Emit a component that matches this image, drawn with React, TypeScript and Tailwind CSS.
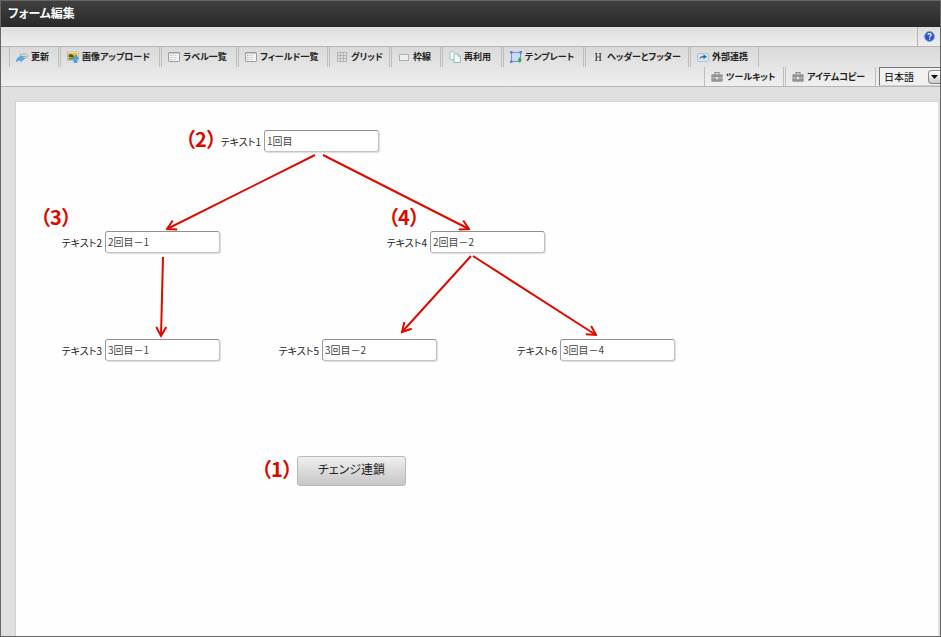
import type { ReactNode } from 'react';
import clsx from 'clsx';

interface ToolItem {
    label: string;
    icon: ReactNode;
    width: string;
}

interface FieldNode {
    id: string;
    label: string;
    value: string;
    position: string;
}

function RefreshIcon() {
    return (
        <svg width="12" height="12" viewBox="0 0 12 12" aria-hidden="true">
            <path d="M4.500 3h6l1 1.500v1.500l-1.500 1.500h-6z" fill="#d3dae0" stroke="#98a5b0" strokeWidth=".7" />
            <path d="M6 5.500h4" stroke="#7a8893" strokeWidth=".7" />
            <path d="M.5 10.500c.3-3 1.700-4.300 4-4.200L4.300 5l4 2.700-3.500 2.800v-1.400c-1.500-.2-2.600.2-4.300 1.400z" fill="#52b4ee" stroke="#2b86c9" strokeWidth=".6" />
        </svg>
    );
}

function UploadIcon() {
    return (
        <svg width="12" height="12" viewBox="0 0 12 12" aria-hidden="true">
            <rect x=".5" y="1" width="11" height="8.500" fill="#f4f6f3" stroke="#a9b5b5" strokeWidth=".8" />
            <rect x="1.500" y="2" width="9" height="6.500" fill="#f1bf16" />
            <path d="M1.500 6V4l2-1 2.500 1 1 2.500z" fill="#5c4d28" />
            <path d="M1.500 8.500V7h5v1.500z" fill="#3e8e62" />
            <path d="M8.500 4l3.200 3.500h-1.700v4H7v-4H5.300z" fill="#4cabe9" stroke="#237fc6" strokeWidth=".5" />
        </svg>
    );
}

function ListIcon({ accent = false }: { accent?: boolean }) {
    return (
        <svg width="12" height="12" viewBox="0 0 12 12" aria-hidden="true">
            <rect x=".5" y="1.500" width="11" height="9" rx=".5" fill="#f5f5f5" stroke="#8f979b" strokeWidth=".9" />
            <path d="M1 2.500h10" stroke="#c2c9cd" />
            <path d="M2 4.500h1.500M2 6.500h1.500M2 8.500h1.500" stroke={accent ? '#d4a56c' : '#adb9c3'} />
            <path d="M4.500 4.500h4M4.500 6.500h4M4.500 8.500h4" stroke="#c9d0d5" strokeWidth=".8" />
        </svg>
    );
}

function GridIcon() {
    return (
        <svg width="12" height="12" viewBox="0 0 12 12" aria-hidden="true">
            <path d="M1.500 1v10M4.500 1v10M7.500 1v10M10.500 1v10M1 1.500h10M1 4.500h10M1 7.500h10M1 10.500h10" stroke="#b4b4b4" />
        </svg>
    );
}

function FrameIcon() {
    return (
        <svg width="12" height="12" viewBox="0 0 12 12" aria-hidden="true">
            <rect x="1.500" y="3.500" width="9" height="6" fill="#eee" stroke="#b0b0b0" />
        </svg>
    );
}

function PagesIcon() {
    return (
        <svg width="12" height="12" viewBox="0 0 12 12" aria-hidden="true">
            <path d="M1 .8h4l2 2v6H1z" fill="#f5fafa" stroke="#8eb6b8" strokeWidth=".8" />
            <path d="M5 3h4l2.300 2.300v6.200H5z" fill="#fff" stroke="#7ba9ad" strokeWidth=".8" />
            <path d="M9 3v2.300h2.300" fill="#d6e8e8" stroke="#7ba9ad" strokeWidth=".7" />
        </svg>
    );
}

function TemplateIcon() {
    return (
        <svg width="12" height="12" viewBox="0 0 12 12" aria-hidden="true">
            <rect x="1.500" y="1.500" width="9" height="9" fill="#c9dcf6" stroke="#6f93e0" />
            <path d="M0 0h2.500v2.500H0zM9.500 0H12v2.500H9.500zM0 9.500h2.500V12H0z" fill="#5c7fe0" />
            <path d="M8.800 6.500h1.800v2H12L9.700 12 7.400 8.500h1.400z" fill="#2bb33c" />
        </svg>
    );
}

function HeaderIcon() {
    return (
        <svg width="12" height="12" viewBox="0 0 12 12" aria-hidden="true">
            <path d="M3 2.500h2.500M7 2.500h2.500M3 9.500h2.500M7 9.500h2.500M4.300 6h4" stroke="#555" strokeWidth=".9" />
            <path d="M4.300 2.500v7M8.200 2.500v7" stroke="#444" strokeWidth="1.200" />
        </svg>
    );
}

function ShareIcon() {
    return (
        <svg width="12" height="12" viewBox="0 0 12 12" aria-hidden="true">
            <rect x=".5" y="2.500" width="11" height="8" rx="1.500" fill="#d2e8f8" stroke="#9dbed8" strokeWidth=".8" />
            <path d="M2.500 8.500c0-2.500 1.500-3.500 4-3.500V3.300L10 5.800 6.500 8.200V6.600c-2 0-3 .5-4 1.900z" fill="#4a6478" />
        </svg>
    );
}

function ToolkitIcon() {
    return (
        <svg width="12" height="12" viewBox="0 0 12 12" aria-hidden="true">
            <path d="M4 3.500V1.500h4v2" fill="none" stroke="#8a8a8a" strokeWidth="1.100" />
            <rect x=".3" y="3.300" width="11.400" height="7.500" rx=".8" fill="#939393" />
            <path d="M0 7h12" stroke="#d2d2d2" strokeWidth=".8" />
            <path d="M5 6h2v2.300H5z" fill="#e6e6e6" />
        </svg>
    );
}

const MAIN_TOOLS: ToolItem[] = [
    { label: '更新', icon: <RefreshIcon />, width: 'w-[50px]' },
    { label: '画像アップロード', icon: <UploadIcon />, width: 'w-[100px]' },
    { label: 'ラベル一覧', icon: <ListIcon />, width: 'w-[76px]' },
    { label: 'フィールド一覧', icon: <ListIcon accent />, width: 'w-[90px]' },
    { label: 'グリッド', icon: <GridIcon />, width: 'w-[61px]' },
    { label: '枠線', icon: <FrameIcon />, width: 'w-[50px]' },
    { label: '再利用', icon: <PagesIcon />, width: 'w-[60px]' },
    { label: 'テンプレート', icon: <TemplateIcon />, width: 'w-[81px]' },
    { label: 'ヘッダーとフッター', icon: <HeaderIcon />, width: 'w-[104px]' },
    { label: '外部連携', icon: <ShareIcon />, width: 'w-[69px]' },
];

const SUB_TOOLS: ToolItem[] = [
    { label: 'ツールキット', icon: <ToolkitIcon />, width: 'w-[80px]' },
    { label: 'アイテムコピー', icon: <ToolkitIcon />, width: 'w-[91px]' },
];

const FIELDS: FieldNode[] = [
    { id: 'text1', label: 'テキスト1', value: '1回目', position: 'left-[205px] top-[28px]' },
    { id: 'text2', label: 'テキスト2', value: '2回目－1', position: 'left-[46px] top-[129px]' },
    { id: 'text4', label: 'テキスト4', value: '2回目－2', position: 'left-[371px] top-[129px]' },
    { id: 'text3', label: 'テキスト3', value: '3回目－1', position: 'left-[46px] top-[237px]' },
    { id: 'text5', label: 'テキスト5', value: '3回目－2', position: 'left-[263px] top-[237px]' },
    { id: 'text6', label: 'テキスト6', value: '3回目－4', position: 'left-[501px] top-[237px]' },
];

const STEPS = [
    { text: '（1）', position: 'left-[245px] top-[353px]' },
    { text: '（2）', position: 'left-[169px] top-[23px]' },
    { text: '（3）', position: 'left-[24px] top-[101px]' },
    { text: '（4）', position: 'left-[372px] top-[101px]' },
];

// Arrow shafts as [x1, y1, x2, y2] on the canvas
const ARROWS = [
    [299, 53, 151, 127],
    [307, 53, 453, 127],
    [147, 155, 145, 234],
    [455, 154, 386, 230],
    [457, 154, 580, 233],
];

function ToolButton({ item }: { item: ToolItem }) {
    return (
        <button
            type="button"
            className={clsx(
                'mr-px flex h-5 shrink-0 items-center gap-[3px] border-x border-[#bdbdbd] pl-1.5 text-[9px] font-bold whitespace-nowrap text-[#222]',
                item.width
            )}
        >
            <span className="shrink-0">{item.icon}</span>
            {item.label}
        </button>
    );
}

function Field({ field }: { field: FieldNode }) {
    return (
        <div className={clsx('absolute flex w-[158px] items-center justify-end gap-[3px]', field.position)}>
            <label htmlFor={field.id} className="text-[10px] whitespace-nowrap text-[#222]">
                {field.label}
            </label>
            <input
                id={field.id}
                type="text"
                defaultValue={field.value}
                className="h-[22px] w-[115px] shrink-0 rounded-[3px] border border-[#c4c4c4] border-t-[#8f8f8f] border-l-[#9c9c9c] bg-white px-0.5 pb-0.5 text-[10px] text-[#444] shadow-[1px_1px_1px_#ddd]"
            />
        </div>
    );
}

export default function App() {
    return (
        <div className="flex min-h-screen flex-col overflow-hidden border border-[#666] bg-[#e0e0e0] font-['Noto_Sans_CJK_JP',sans-serif] [font-feature-settings:'palt']">
            <header className="flex h-[26px] items-center bg-linear-to-b from-[#404040] to-[#292929] px-[7px] pb-0.5">
                <h1 className="text-xs font-bold text-white">フォーム編集</h1>
            </header>

            <div className="flex h-5 justify-end border-b border-[#b5b5b5] bg-linear-to-b from-[#dedede] to-[#eee]">
                <div className="flex w-[23px] items-center justify-center border-l border-[#b5b5b5]">
                    <button type="button" aria-label="ヘルプ">
                        <svg width="11" height="11" viewBox="0 0 11 11" aria-hidden="true">
                            <circle cx="5.500" cy="5.500" r="4.900" fill="#2552cf" stroke="#8b9bcb" strokeWidth=".9" />
                            <path d="M3.900 4.200c0-2 3.300-2 3.300-.1 0 1.200-1.600 1.200-1.600 2.500M5.600 7.600v1.200" fill="none" stroke="#fff" strokeWidth="1.200" />
                        </svg>
                    </button>
                </div>
            </div>

            <div className="h-10 border-b border-[#b5b5b5] bg-linear-to-b from-[#dadada] to-[#efefef]">
                <nav className="flex pl-2">
                    {MAIN_TOOLS.map((item) => (
                        <ToolButton key={item.label} item={item} />
                    ))}
                </nav>
                <div className="flex h-[19px] justify-end overflow-hidden">
                    {SUB_TOOLS.map((item) => (
                        <ToolButton key={item.label} item={item} />
                    ))}
                    <div className="relative ml-0.5 w-[61px] shrink-0">
                        <select
                            aria-label="言語"
                            className="block h-[19px] w-full appearance-none border border-r-0 border-[#d0d0d0] border-t-[#777] border-l-[#777] bg-[#f1f1f1] pl-1 text-[10px] text-black"
                        >
                            <option>日本語</option>
                        </select>
                        <span className="pointer-events-none absolute top-[3px] right-0 flex h-3.5 w-3 items-center justify-center rounded-l-sm border border-r-0 border-[#888] bg-linear-to-b from-white to-[#ccc]">
                            <svg width="7" height="4" viewBox="0 0 7 4" aria-hidden="true">
                                <path d="M0 0h7L3.500 4z" fill="#111" />
                            </svg>
                        </span>
                    </div>
                </div>
            </div>

            <div className="flex flex-1 pt-3.5 pr-0.5 pl-3.5">
                <main className="relative flex-1 border-t border-l border-[#d2d2d2] bg-[#fefefe]">
                    {FIELDS.map((field) => (
                        <Field key={field.id} field={field} />
                    ))}

                    <button
                        type="button"
                        className="absolute top-[354px] left-[281px] h-[30px] w-[109px] rounded-[3px] border border-[#b8b8b8] bg-linear-to-b from-[#f0f0f0] to-[#c6c6c6] pb-1 text-xs text-[#222]"
                    >
                        チェンジ連鎖
                    </button>

                    {STEPS.map((step) => (
                        <span
                            key={step.text}
                            className={clsx('absolute text-xl font-bold text-[#d90b00]', step.position)}
                        >
                            {step.text}
                        </span>
                    ))}

                    <svg
                        width="680"
                        height="280"
                        className="pointer-events-none absolute top-0 left-0"
                        aria-hidden="true"
                    >
                        <defs>
                            <marker id="tip" viewBox="0 0 12 12" refX="10.500" refY="6" markerWidth="12" markerHeight="12" markerUnits="userSpaceOnUse" orient="auto">
                                <path d="M1.500 1l9 5-9 5" fill="none" stroke="#dc0b00" strokeWidth="2" />
                            </marker>
                        </defs>
                        {ARROWS.map(([x1, y1, x2, y2]) => (
                            <line key={`${x1}-${y1}`} x1={x1} y1={y1} x2={x2} y2={y2} stroke="#dc0b00" strokeWidth="2" markerEnd="url(#tip)" />
                        ))}
                    </svg>
                </main>
            </div>
        </div>
    );
}
